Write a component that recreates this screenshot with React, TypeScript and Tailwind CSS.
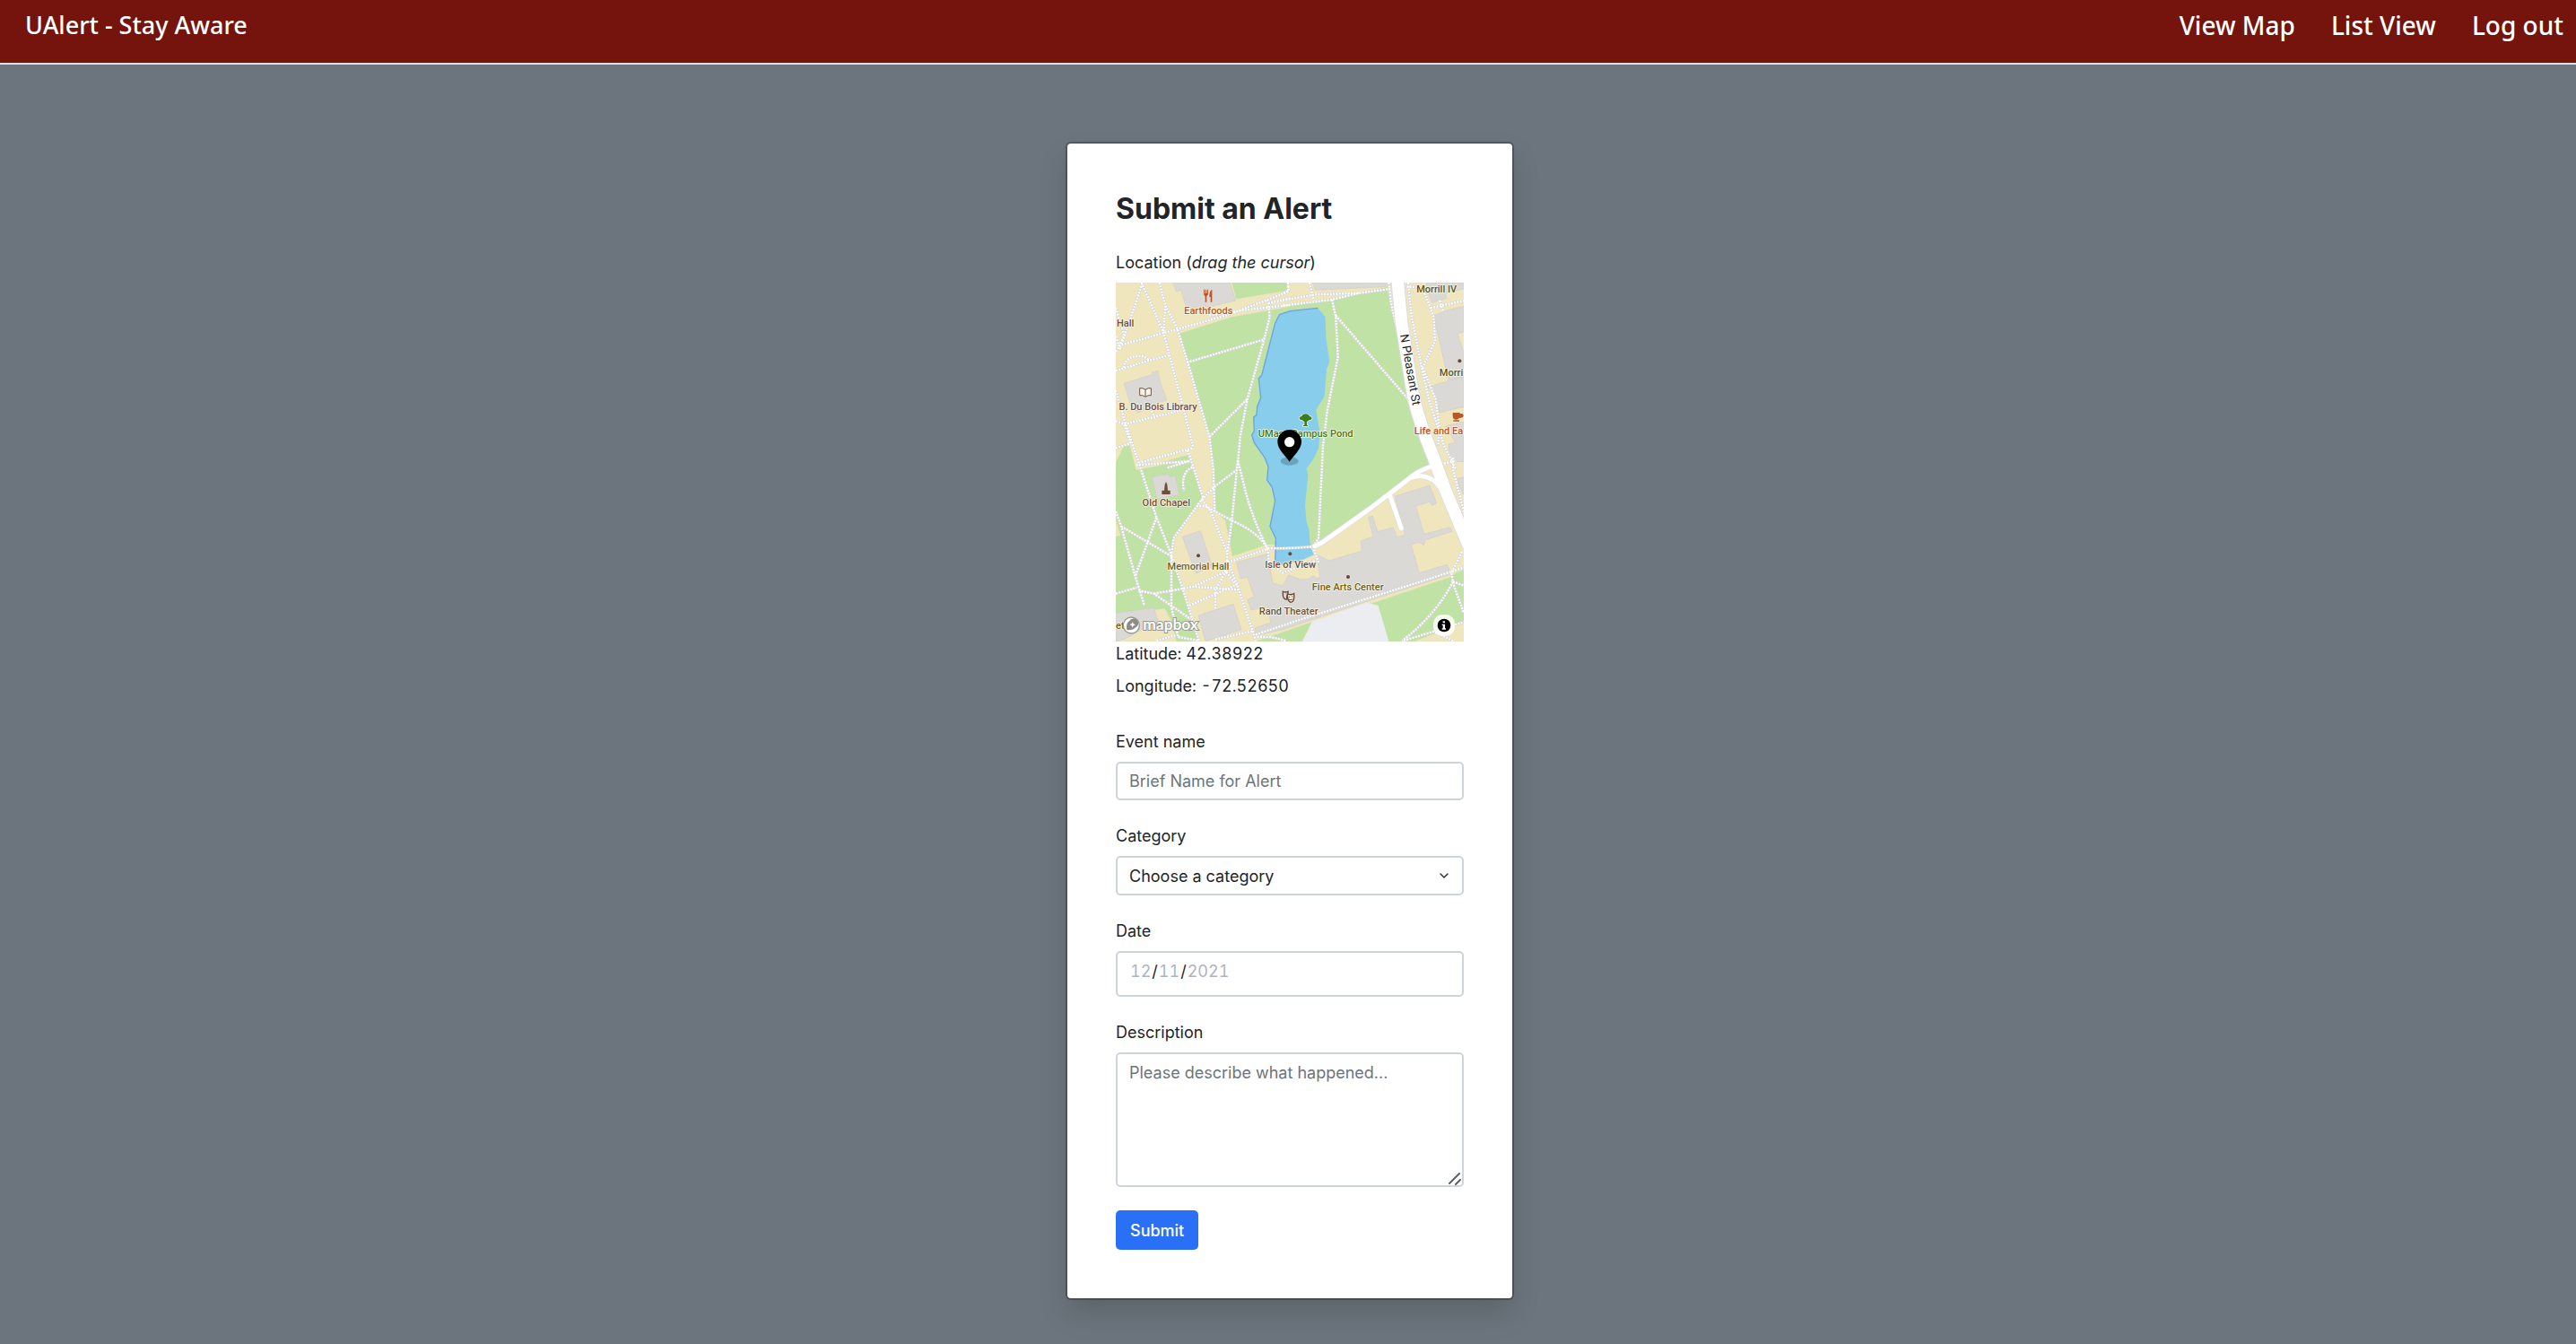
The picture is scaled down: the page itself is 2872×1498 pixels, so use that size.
import type { ReactNode } from "react";
import { ChevronDown } from "lucide-react";

const footpaths = [
  // north-west quad
  "M12 100 L40 190 L22 228", "M12 195 L28 240", "M12 245 L32 220 L100 20", "M98 15 L172 182 L272 568",
  "M22 226 L170 184 L380 125 L520 72 L590 45 L588 15", "M158 15 L178 92 L172 182", "M178 92 L218 170 L255 290 L325 530 L338 640 L343 780",
  "M12 310 L100 282 L188 258", "M40 300 C38 255 112 250 122 276", "M12 375 L45 488 L90 620 L148 800 L198 925",
  "M12 478 L45 488 L250 437", "M125 425 L138 458", "M12 568 L62 553", "M98 615 L270 568", "M252 575 L265 612 L305 738",
  "M40 490 L62 553", "M250 282 L508 205", "M326 530 L452 404", "M520 72 L527 130 L508 205 L452 404 L428 530 L420 620",
  "M325 125 L455 105 L590 90", "M522 84 L600 66", "M570 92 L735 72 L825 50 L930 36", "M570 74 L680 55 L825 50",
  "M660 15 L675 75", "M587 15 L590 42 L570 50", "M735 72 L748 130 L755 265 L720 440 L705 560 L690 870 L672 898",
  "M748 125 L990 405", "M925 15 L932 80 L955 185",
  // east side of the street
  "M990 15 L1000 120 L1035 300 L1060 410 L1110 560 L1150 640", "M975 28 L1020 30", "M1045 50 L1075 130 L1080 210 L1038 300",
  "M1038 300 L1082 405 L1094 500 L1090 560", "M1065 100 L1176 75", "M1095 75 L1108 112", "M1140 600 L1140 640 L1176 780", "M1110 620 L1150 610",
  // chapel lawn
  "M80 625 L260 612", "M185 634 L262 610 M268 632 C240 645 232 675 240 712", "M12 780 L30 830 L78 1000 L108 1095",
  "M30 830 L198 930", "M148 800 L78 995", "M12 1055 L82 1035", "M88 1045 L140 1055 L262 1140", "M140 1055 L270 1032 L422 1042",
  "M418 640 L345 695 L300 740 L205 870 L198 930 L198 1100 L220 1200 L290 1212", "M198 930 L235 1035 L290 1212",
  "M300 740 L330 780 L385 920 L382 980 L270 1032", "M282 762 L310 762 L400 810 Q490 850 520 905 L388 950",
  "M420 610 L400 810 L385 920", "M420 610 L438 680 Q465 800 520 905", "M385 945 L420 1030 L480 1212", "M375 975 L415 1025 L258 1095",
  "M382 980 L345 1040 L345 1105", "M148 1212 L210 1195", "M345 1208 L470 1180",
  // arts centre
  "M520 903 Q600 905 670 898", "M520 905 L525 950 L570 985 L680 945", "M672 898 L690 950",
  "M480 1192 L650 1135 L1000 1025 L1176 968", "M485 1200 L530 1200 L580 1212", "M1170 915 L1135 985 L1140 1020 L1176 1120",
  "M1140 1015 L1176 1028", "M1140 1015 Q1080 1130 970 1212", "M975 1212 L1080 1180 L1176 1150", "M1080 1185 L1140 1212",
];

const buildings = [
  "203,15 215,45 230,40 248,98 330,95 413,75 393,15",
  "40,352 135,322 133,315 153,310 160,345 182,408 160,415 85,450 60,420",
  "132,665 190,655 192,665 210,660 224,725 150,738",
  "235,865 295,845 335,965 280,987",
  "288,1128 405,1090 432,1175 312,1214",
  "12,1120 140,1102 152,1145 45,1205 12,1215",
  "670,15 930,15 930,28 680,40",
  "1050,15 1176,15 1176,35 1115,50 1118,68 1070,82 1058,50",
  "1075,125 1130,105 1176,95 1176,180 1155,185 1176,250 1176,325 1125,344",
  "1055,365 1176,328 1176,430 1095,450 1085,400",
  "1115,495 1176,480 1176,614 1130,612 1125,555 1148,550",
  "1155,670 1176,665 1176,725 1160,695",
  "415,950 520,922 537,1020 570,1028 590,993 630,1008 660,1005 668,998 678,997 683,1005 695,1002 685,925 725,945 835,912 832,878 873,865 857,800 871,795 887,848 940,834 953,866 980,858 945,730 1062,693 1085,753 1070,760 1063,748 1015,762 1043,856 1130,833 1137,847 1048,875 1042,892 1025,883 1000,892 1027,986 1120,958 1133,990 860,1078 570,1175 480,1195 478,1170 530,1152 520,1098 465,1110 452,1075 475,1065 452,1000 430,1005",
];

const greens = [
  "225,185 400,130 570,100 920,30 945,130 990,400 1062,630 1000,660 680,900 520,890 402,930 378,810 345,780 338,610 325,540 250,280",
  "400,15 582,15 585,42 415,70",
  "570,15 592,15 592,45 570,48",
  "40,560 58,556 80,642 265,605 300,735 205,865 198,930 292,1215 215,1215 198,1145 175,1105 12,1125 12,615",
  "170,615 255,590 264,615",
  "865,1088 1130,1000 1150,985 1176,975 1176,1150 1010,1215 925,1215 888,1095",
  "480,1215 668,1150 640,1215",
];

function Pin({ label, x, y, color, children }: { label: string; x: number; y: number; color: string; children?: ReactNode }) {
  return (
    <g fill={color}>
      <text x={x} y={y} fontSize="33" fontWeight="500" textAnchor="middle" stroke="#f8f5e4" strokeWidth="5" strokeLinejoin="round" paintOrder="stroke">
        {label}
      </text>
      {children}
    </g>
  );
}

function CampusMap() {
  return (
    <svg viewBox="12 15 1164 1200" role="img" aria-label="Campus map" className="block h-auto w-full font-['Roboto',sans-serif]">
      <rect x="12" y="15" width="1164" height="1200" fill="#efe6be" />
      {greens.map((p) => <polygon key={p} points={p} fill="#c1e2a5" />)}
      <polygon points="12,810 28,860 12,865" fill="#efe6be" />
      <polygon points="668,1150 850,1085 890,1095 925,1215 635,1215" fill="#ecedf1" />
      <polygon
        points="688,100 595,110 560,122 545,150 500,325 490,335 497,400 485,430 483,457 473,465 475,510 467,525 475,550 510,600 522,630 518,675 535,700 545,745 528,830 547,870 545,955 570,960 630,945 675,925 663,900 658,840 650,815 645,760 650,710 655,660 650,635 670,610 690,570 695,520 682,440 710,395 717,305 727,280 715,200 713,130"
        fill="#88cdec"
      />
      <path d="M688 100 L595 110 L560 122 L545 150 L500 325 L490 335 L497 400 L485 430 L483 457 L473 465 L475 510 L467 525 L475 550 L510 600 L522 630 L518 675 L535 700 L545 745 L528 830 L547 870 L545 955" fill="none" stroke="#6aa3e8" strokeWidth="4" />
      {buildings.map((p) => <polygon key={p} points={p} fill="#dad9d6" stroke="#cfcdca" strokeWidth="2" />)}
      <g fill="none" strokeLinejoin="round">
        {footpaths.map((d) => <path key={d} d={d} stroke="#d3d4d6" strokeWidth="9" />)}
        {footpaths.map((d) => <path key={d} d={d} stroke="#ffffff" strokeWidth="7" strokeDasharray="6 4" />)}
        {["#dcdce4", "#ffffff"].map((stroke, i) => (
          <g key={stroke} stroke={stroke} strokeLinecap="round">
            <path d="M677 896 L702 884 L870 765 L1000 665 Q1030 640 1075 628 M1000 667 C1040 655 1075 665 1100 705 M930 730 L967 837" strokeWidth={i ? 15 : 19} />
            <path d="M954 5 L968 150 L1008 400 Q1030 490 1075 600 L1115 710 L1190 890" strokeWidth={i ? 40 : 46} />
          </g>
        ))}
      </g>
      <text transform="translate(963 190) rotate(80)" fontSize="40" fill="#222222" stroke="#ffffff" strokeWidth="4" paintOrder="stroke">N Pleasant St</text>

      <Pin label="Earthfoods" x={322} y={120} color="#b8562a">
        <path d="M306 38 v14 q0 7 5 8 v20 h5 v-20 q5 -1 5 -8 v-14 h-3 v13 h-3 v-13 h-3 v13 h-3 v-13 z M334 38 q-9 3 -9 25 h4 v17 h5 z" />
      </Pin>
      <Pin label="Hall" x={44} y={161} color="#6b5148" />
      <Pin label="B. Du Bois Library" x={153} y={441} color="#6b5148">
        <path d="M92 368 q10 -2 19 5 q9 -7 19 -5 v24 q-10 -2 -19 5 q-9 -7 -19 -5 z M111 373 v22" fill="#f8f5e4" stroke="#6b5148" strokeWidth="3" />
      </Pin>
      <Pin label="UMass Campus Pond" x={647} y={532} color="#3b7c22">
        <path d="M643 492 v-12 l-9 -6 q-8 1 -8 -6 q1 -6 8 -6 q3 -8 13 -8 q10 0 13 8 q8 1 8 7 q-1 6 -9 6 l-8 5 v12 h4 v3 h-16 v-3 z" stroke="#f1f7e6" strokeWidth="4" paintOrder="stroke" />
      </Pin>
      <Pin label="Morrill IV" x={1085} y={47} color="#5f5318" />
      <Pin label="Morri" x={1134} y={326} color="#5f5318"><circle cx="1162" cy="277" r="6" fill="#6b4637" /></Pin>
      <Pin label="Life and Ea" x={1092} y={522} color="#b8562a">
        <path d="M1139 450 h24 v4 q12 -3 12 5 q0 9 -15 9 q-3 5 -9 5 q-12 0 -12 -12 z M1141 475 h20 v4 h-20 z" />
      </Pin>
      <Pin label="Old Chapel" x={181} y={761} color="#6b5148">
        <path d="M176 690 l4 -9 l4 9 l2 20 h8 v13 h-28 v-13 h8 z" fill="#704f3d" />
      </Pin>
      <Pin label="Memorial Hall" x={288} y={976} color="#736215"><circle cx="288" cy="928" r="6" fill="#6b4637" /></Pin>
      <Pin label="Isle of View" x={596} y={969} color="#6b5148"><circle cx="595" cy="922" r="6" fill="#6b4637" /></Pin>
      <Pin label="Fine Arts Center" x={788} y={1045} color="#736215"><circle cx="789" cy="999" r="6" fill="#6b4637" /></Pin>
      <Pin label="Rand Theater" x={590} y={1124} color="#6b5148">
        <path d="M571 1048 q8 4 17 0 v8 q-6 6 -3 18 q-14 0 -14 -16 z" fill="none" stroke="#6b4637" strokeWidth="4" />
        <path d="M586 1056 q11 5 22 -1 q3 28 -11 29 q-11 -3 -11 -28 z" fill="#f8f5e4" stroke="#6b4637" strokeWidth="4" />
        <path d="M591 1066 h4 M600 1065 h4 M591 1074 q6 4 13 -1" fill="none" stroke="#6b4637" strokeWidth="3" />
      </Pin>
      <Pin label="ett" x={32} y={1172} color="#736215" />

      <ellipse cx="593" cy="612" rx="30" ry="14" fill="#24424f" opacity="0.3" />
      <path d="M593 614 C582 596 553 574 553 547 A40 40 0 0 1 633 547 C633 574 604 596 593 614 Z" fill="#000000" />
      <circle cx="593" cy="548" r="17" fill="#ffffff" />

      <g fill="#ffffff" stroke="#96968f" strokeWidth="4">
        <circle cx="64" cy="1161" r="27" />
        <path d="M49 1176 Q45 1154 57 1147 A16 16 0 1 1 77 1169 Q66 1179 49 1176 Z" fill="#8d8d87" stroke="none" />
        <path d="M68 1149 l3 7 7 3 -7 3 -3 7 -3 -7 -7 -3 7 -3 z" stroke="none" />
        <text x="103" y="1175" fontSize="52" fontWeight="700" paintOrder="stroke" strokeWidth="6" className="font-['Lato',sans-serif]">mapbox</text>
      </g>
      <rect x="1074" y="1125" width="72" height="72" rx="30" fill="#ffffff" opacity="0.85" />
      <circle cx="1110" cy="1161" r="22" fill="#000000" />
      <path d="M1106 1147 h7 v6 h-7 z M1103 1157 h10 v14 h3 v4 h-13 v-4 h3 v-10 h-3 z" fill="#ffffff" />
    </svg>
  );
}

const field = "block w-full rounded-[5px] border-2 border-[#ced4da] bg-white px-[13px] text-lg leading-[27px] text-[#212529] outline-none placeholder:text-[#6c757d] placeholder:opacity-100";

function Field({ id, label, children }: { id: string; label: string; children: ReactNode }) {
  return (
    <div>
      <label htmlFor={id} className="mb-[9px] block">{label}</label>
      {children}
    </div>
  );
}

export default function App() {
  return (
    <div className="min-h-screen bg-[#6c757d] font-['Inter',sans-serif] text-lg leading-[27px] text-[#212529]">
      <header className="flex h-[72px] items-start justify-between border-b-2 border-[#dee2e6] bg-[#75140d] pt-2 pr-3.5 pl-7 font-['Trebuchet_MS','Noto_Sans',sans-serif] font-medium text-white">
        <a href="#home" className="text-[27px] leading-10">UAlert - Stay Aware</a>
        <nav className="flex gap-10 text-[28px] leading-10">
          <a href="#map">View Map</a>
          <a href="#list">List View</a>
          <a href="#logout">Log out</a>
        </nav>
      </header>
      <main className="flex justify-center pt-[88px] pb-12 pl-1">
        <section className="w-full max-w-[496px] rounded-[4px] bg-white p-[54px] shadow-[0_0_0_2px_rgba(0,0,0,0.25),0_16px_32px_rgba(0,0,0,0.15)]">
          <h1 className="mb-[27px] text-[32px] leading-[38px] font-bold">Submit an Alert</h1>
          <p className="mb-[9px]">Location (<em>drag the cursor</em>)</p>
          <CampusMap />
          <p className="tabular-nums">Latitude: 42.38922</p>
          <p className="mt-[9px] tabular-nums">Longitude: -72.52650</p>
          <form className="mt-[35px] flex flex-col gap-[26px]">
            <Field id="name" label="Event name">
              <input id="name" type="text" placeholder="Brief Name for Alert" className={`${field} h-[43px]`} />
            </Field>
            <Field id="category" label="Category">
              <div className="relative">
                <select id="category" className={`${field} h-11 appearance-none`}>
                  <option>Choose a category</option>
                </select>
                <ChevronDown className="pointer-events-none absolute top-3.5 right-3.5 size-4" strokeWidth={2} />
              </div>
            </Field>
            <Field id="date" label="Date">
              <input
                id="date"
                type="date"
                defaultValue="2021-12-11"
                className={`${field} h-[51px] pt-[7px] pb-[13px] tabular-nums [&::-webkit-calendar-picker-indicator]:hidden [&::-webkit-datetime-edit]:p-0 [&::-webkit-datetime-edit-day-field]:text-[#adb5bd] [&::-webkit-datetime-edit-month-field]:text-[#adb5bd] [&::-webkit-datetime-edit-year-field]:text-[#adb5bd]`}
              />
            </Field>
            <Field id="description" label="Description">
              <div className="relative">
                <textarea id="description" placeholder="Please describe what happened..." className={`${field} h-[150px] resize-none py-[7px]`} />
                <svg viewBox="0 0 14 14" className="pointer-events-none absolute right-[3px] bottom-0.5 size-3.5" fill="none" stroke="#5f5f5f" strokeWidth="2" strokeLinecap="round">
                  <path d="M1 12 L12 1 M8 13 L13 8" />
                </svg>
              </div>
            </Field>
            <button type="submit" className="h-11 self-start rounded-[5px] bg-[#2970f6] px-4 font-medium text-white">Submit</button>
          </form>
        </section>
      </main>
    </div>
  );
}
